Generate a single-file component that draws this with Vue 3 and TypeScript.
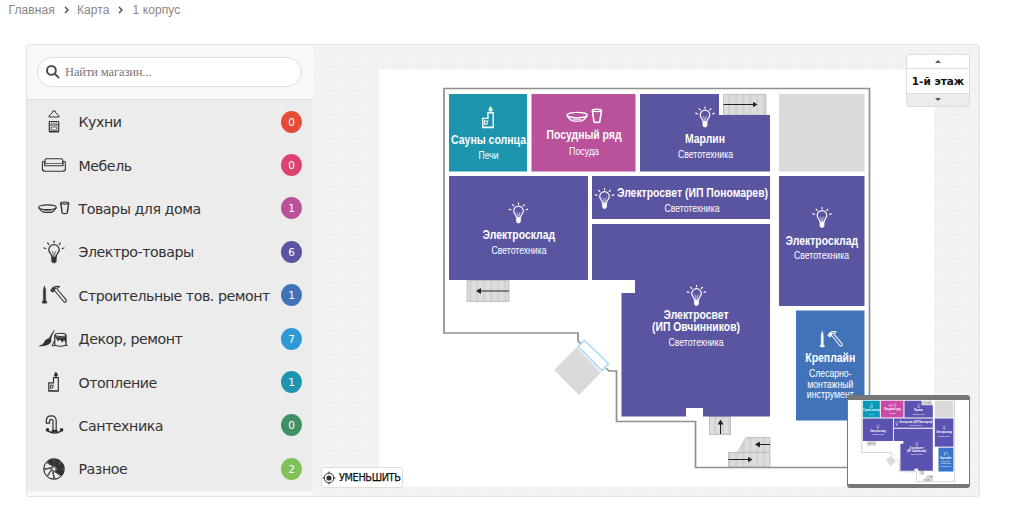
<script lang="ts" setup>
import { ref } from 'vue';

interface Category {
  title: string;
  icon: string;
  count: number;
  tone: string;
}

interface Label {
  text: string;
  x: number;
  y: number;
  width: number;
  bold?: boolean;
}

interface Room {
  tone: string;
  points: string;
  icon?: string;
  iconX?: number;
  iconY?: number;
  iconScale?: number;
  labels: Label[];
}

const crumbs = ['Главная', 'Карта', '1 корпус'];
const search = ref('');
const selected = ref('');

const categories: Category[] = [
  { title: 'Кухни', icon: 'kitchen', count: 0, tone: 'red' },
  { title: 'Мебель', icon: 'sofa', count: 0, tone: 'rose' },
  { title: 'Товары для дома', icon: 'dishes', count: 1, tone: 'pink' },
  { title: 'Электро-товары', icon: 'bulb', count: 6, tone: 'violet' },
  { title: 'Строительные тов. ремонт', icon: 'tools', count: 1, tone: 'blue' },
  { title: 'Декор, ремонт', icon: 'paint', count: 7, tone: 'sky' },
  { title: 'Отопление', icon: 'stove', count: 1, tone: 'teal' },
  { title: 'Сантехника', icon: 'tap', count: 0, tone: 'green' },
  { title: 'Разное', icon: 'fan', count: 2, tone: 'lime' },
];

const rooms: Room[] = [
  {
    tone: 'teal',
    points: '449,94 527,94 527,171.5 449,171.5',
    icon: 'stove',
    iconX: 488.5,
    iconY: 117.5,
    iconScale: 1.1,
    labels: [
      { text: 'Сауны солнца', x: 488.5, y: 143.5, width: 75, bold: true },
      { text: 'Печи', x: 488.5, y: 158.5, width: 20 },
    ],
  },
  {
    tone: 'pink',
    points: '531.5,94 635.5,94 635.5,171.5 531.5,171.5',
    icon: 'dishes',
    iconX: 584.6,
    iconY: 116,
    iconScale: 1.15,
    labels: [
      { text: 'Посудный ряд', x: 584, y: 139.3, width: 75, bold: true },
      { text: 'Посуда', x: 584, y: 154.5, width: 30 },
    ],
  },
  {
    tone: 'violet',
    points: '640,94 719,94 719,115 770,115 770,171.5 640,171.5',
    icon: 'bulb',
    iconX: 705,
    iconY: 117,
    labels: [
      { text: 'Марлин', x: 705, y: 143, width: 40, bold: true },
      { text: 'Светотехника', x: 705.5, y: 158, width: 55 },
    ],
  },
  { tone: 'empty', points: '779,94 864.5,94 864.5,171.5 779,171.5', labels: [] },
  {
    tone: 'violet',
    points: '449,176 588,176 588,280 449,280',
    icon: 'bulb',
    iconX: 518.5,
    iconY: 213,
    labels: [
      { text: 'Электросклад', x: 518.8, y: 239.3, width: 72.5, bold: true },
      { text: 'Светотехника', x: 519, y: 254, width: 55 },
    ],
  },
  {
    tone: 'violet',
    points: '592,176 770,176 770,219 592,219',
    icon: 'bulb',
    iconX: 604.5,
    iconY: 198.5,
    labels: [
      { text: 'Электросвет (ИП Пономарев)', x: 692.5, y: 196.7, width: 151, bold: true },
      { text: 'Светотехника', x: 692, y: 211.7, width: 55 },
    ],
  },
  {
    tone: 'violet',
    points:
      '592,224 770,224 770,416.5 703,416.5 703,408 686,408 686,416.5 621.5,416.5 621.5,293 635,293 635,280 592,280',
    icon: 'bulb',
    iconX: 696.5,
    iconY: 295.5,
    labels: [
      { text: 'Электросвет', x: 696, y: 318.7, width: 65, bold: true },
      { text: '(ИП Овчинников)', x: 696, y: 331.3, width: 88, bold: true },
      { text: 'Светотехника', x: 696, y: 346, width: 55 },
    ],
  },
  {
    tone: 'violet',
    points: '779,176 864.5,176 864.5,306 779,306',
    icon: 'bulb',
    iconX: 822,
    iconY: 217.5,
    labels: [
      { text: 'Электросклад', x: 821.8, y: 244.5, width: 72.5, bold: true },
      { text: 'Светотехника', x: 821.5, y: 259.3, width: 55 },
    ],
  },
  {
    tone: 'blue',
    points: '796,310.5 864.5,310.5 864.5,420.5 796,420.5',
    icon: 'tools',
    iconX: 831,
    iconY: 339.5,
    labels: [
      { text: 'Креплайн', x: 830.3, y: 362.3, width: 50, bold: true },
      { text: 'Слесарно-', x: 830.3, y: 377, width: 42.5 },
      { text: 'монтажный', x: 830.3, y: 387.5, width: 46 },
      { text: 'инструмент', x: 830.3, y: 398, width: 47 },
    ],
  },
];
</script>

<template>
  <nav class="crumbs">
    <template v-for="(crumb, i) in crumbs" :key="crumb">
      <svg v-if="i > 0" class="chevron" viewBox="0 0 6 8">
        <path d="M1 1l3 3-3 3" />
      </svg>
      <a>{{ crumb }}</a>
    </template>
  </nav>

  <main class="panel">
    <aside class="sidebar">
      <div class="search">
        <label class="search-box">
          <svg viewBox="0 0 14 14">
            <circle cx="5.4" cy="5.4" r="4.4" />
            <path d="M8.8 8.8l4.300 4.300" />
          </svg>
          <input v-model="search" type="text" placeholder="Найти магазин..." />
        </label>
      </div>
      <ul class="categories">
        <li v-for="item in categories" :key="item.title" @click="selected = item.title">
          <svg class="icon" viewBox="-18 -15 36 30">
            <use :href="'#icon-' + item.icon" />
          </svg>
          <span class="title">{{ item.title }}</span>
          <span class="count" :class="item.tone">{{ item.count }}</span>
        </li>
      </ul>
    </aside>

    <section class="stage">
      <svg class="canvas" viewBox="313 45 666 451">
        <defs>
          <g id="icon-kitchen" fill="none" stroke="currentColor">
            <path d="M-5-5h10v-1L1.200-10v-1h-2.400v1L-5-6z" />
            <rect x="-4.7" y="-.5" width="9.4" height="10" rx=".5" stroke-width="1.2" />
            <path d="M-4.5 3h9" />
            <path d="M-3 1.200h1.400M-.7 1.200h1.400M1.600 1.200H3" />
            <path d="M-2.8 5h5.600v3h-5.600z" stroke-width=".7" />
            <path d="M-5 9.600H5" stroke-width="1.8" />
          </g>
          <g id="icon-sofa" fill="none" stroke="currentColor" stroke-width="1.1">
            <path d="M-9-1.5v-3.2q0-1.5 1.5-1.5H7.2q1.5 0 1.5 1.5v3.2" />
            <path
              d="M-9.3.8V-3q-2.3-1.4-2.3.8v7.4h1.2v1h20.4v-1h1.3v-7.4q0-2.2-2.3-.8V.8z"
            />
            <path d="M-9.3-1.5H9" stroke-width=".7" />
          </g>
          <g id="icon-dishes" fill="none" stroke="currentColor" stroke-width="1.2">
            <ellipse cx="-6.5" cy="-.8" rx="8.8" ry="2.4" />
            <path d="M-15.2-.2Q-12.2 4.500-8.8 4.500h4.600Q-1 4.500 2.200-.2" />
            <path d="M-10.300 2.800h7.600" stroke-width=".8" />
            <ellipse cx="10.7" cy="-4.9" rx="4" ry="1.1" />
            <path d="M6.7-4.9L8.2 5q2.5 1.3 5 0l1.5-9.9" stroke-width="1.4" />
          </g>
          <g id="icon-bulb" fill="none" stroke="currentColor">
            <path
              d="M-2.200 5.200q0-2.2-1.4-3.8Q-5.200-.3-5.200-2.200A5.200 5.200 0 0 1 5.200-2.200Q5.200-.3 3.600 1.400 2.200 3 2.200 5.200"
              stroke-width="1.3"
            />
            <path d="M-2.2-1.2L-.8 1v4M2.2-1.2L.8 1v4" stroke-width=".7" />
            <path d="M-2.300 5h4.600v4.200l-1.100 1.600h-2.400l-1.100-1.600z" fill="currentColor" stroke-width=".6" />
            <path
              d="M0-11.500v2.600M-6.7-9.400l1.9 2.2M6.7-9.400L4.8-7.200M-10.5-4.200l2.8.9M10.5-4.200l-2.8.9"
              stroke-width="1.2"
            />
          </g>
          <g id="icon-tools" fill="none" stroke="currentColor">
            <path
              d="M-9.5-9.2l1.2 4V6h1v2.200h-4.400V6h1V-5.2z"
              fill="currentColor"
              stroke-width=".4"
            />
            <path
              d="M-3.200-4.600l2-2.600Q1.500-9.400 6-8.200q-2.500.3-3 2.100l1.300 1.600L12.200 4.800q.6 2.300-1.900 2.500L1.800-3 .2-4.600-1.500-3z"
              stroke-width="1.1"
            />
            <path d="M-3-4.500l2.500-2.700h2.800L.3-4.800z" fill="currentColor" stroke-width=".5" />
          </g>
          <g id="icon-paint" stroke="currentColor" fill="none">
            <path
              d="M.4-8.7q-1.8 3-3.6 8.2 1.3 4.6-3.4 6.2Q-10 7.2-14.6 7q4-1.3 4.8-3.5 1-3 5-4.2Q-2-6 .4-8.7z"
              fill="currentColor"
              stroke-width=".6"
            />
            <ellipse cx="6.4" cy="-4.1" rx="5.6" ry="1.6" stroke-width="1.1" />
            <path d="M.8-4.1V6q5.6 2.5 11.2 0V-4.1" stroke-width="1.2" />
            <path
              d="M1-2.500q5.600 2 11 0V4L10 .5 8.300 3.500 6.800 1 5 .8 4 2.200 3 .3z"
              fill="currentColor"
              stroke-width=".4"
            />
            <path d="M.6 1.5L-2 6.7h3.2M11.8 6.4h2" />
          </g>
          <g id="icon-stove" fill="none" stroke="currentColor" stroke-width="1.2">
            <path d="M-5.2 9.2V.8H-.5V-4.3h4.8V9.2z" />
            <path d="M-3.7 3.2h3l-.8 3h-2.200z" stroke-width="1" />
            <path d="M-5 8.500h9" stroke-width=".7" />
            <path
              d="M1.9-10.3q2.3 2 1.9 4-.3 1-1.9 1t-1.9-1Q-.3-8.5 1.9-10.3z"
              fill="currentColor"
              stroke="none"
            />
          </g>
          <g id="icon-tap" fill="none" stroke="currentColor">
            <path
              d="M-7.7-1.8v-2.5q.2-4.8 5-4.8 4.9 0 4.9 5V5.3H-1v-9q0-2-1.7-2-1.8 0-1.8 2v1.9z"
              stroke-width="1.2"
            />
            <path d="M-6 6.2Q.6 9.7 7.2 6.2" stroke-width="1.5" />
            <circle cx="-6.5" cy="4.9" r="1.8" fill="currentColor" stroke="none" />
            <circle cx="7.6" cy="4.9" r="1.8" fill="currentColor" stroke="none" />
            <path d="M-2.4 5h6v2h-6z" fill="currentColor" stroke="none" />
          </g>
          <g id="icon-fan" stroke="currentColor" stroke-width=".8">
            <circle r="10.3" fill="none" stroke-width=".8" />
            <path
              v-for="n in 8"
              :key="n"
              d="M1.200-3L.2-10Q4.500-10 6.500-7.800L2.800-1.200z"
              :fill="n < 5 ? 'currentColor' : 'none'"
              :transform="`rotate(${n * 45 - 90})`"
            />
            <circle r="2" fill="#ececec" />
          </g>
          <pattern id="steps" width="7" height="60" patternUnits="userSpaceOnUse">
            <rect width="7" height="60" fill="#dcdedd" />
            <rect width="2.5" height="60" fill="#d0d3d1" />
          </pattern>
          <marker
            id="arrow"
            viewBox="0 0 5 6"
            refX="3"
            refY="3"
            markerWidth="5"
            markerHeight="6"
            markerUnits="userSpaceOnUse"
            orient="auto"
          >
            <path d="M0 0l5 3-5 3z" fill="#222" />
          </marker>
        </defs>

        <g id="plan">
          <rect x="379" y="70" width="555" height="416.5" fill="#fff" />
          <path
            class="wall"
            d="M581 344l-3-3v-8H444V88.500h425.500V467.500h-174V421.500h-79V371h-7.500l-3-3"
          />
          <path class="porch" d="M554 370l22.500-22.500L601 372.500 579 395z" />
          <path class="door" d="M578 346.500l6.500-6 24 23-6.500 7.300z" />

          <g class="stairs">
            <path d="M723.500 94.500h42.500v20.500h-42.500z" />
            <path d="M467 280.500h42v21h-42z" />
            <path d="M709.500 416.500h21v18h-21z" />
            <path d="M737.500 452.500l8.500-15h24v15z" />
            <path d="M728.500 452.500h41.500v14h-41.500z" />
          </g>
          <g class="arrows">
            <path d="M723.500 104.500h32" />
            <path d="M509 291h-31" />
            <path d="M720.500 434v-12.500" />
            <path d="M770 444.500h-13" />
            <path d="M728.500 459.500h22" />
          </g>

          <g v-for="(room, i) in rooms" :key="i" class="room" :class="room.tone">
            <polygon :points="room.points" />
            <use
              v-if="room.icon"
              :href="'#icon-' + room.icon"
              :transform="`translate(${room.iconX} ${room.iconY}) scale(${room.iconScale ?? 0.92})`"
            />
            <text
              v-for="label in room.labels"
              :key="label.text"
              :x="label.x"
              :y="label.y"
              :textLength="label.width"
              :class="{ bold: label.bold }"
              lengthAdjust="spacingAndGlyphs"
            >
              {{ label.text }}
            </text>
          </g>
        </g>
      </svg>

      <div class="floors">
        <button aria-label="Этаж выше"><i class="up"></i></button>
        <strong>1-й этаж</strong>
        <button class="below" aria-label="Этаж ниже"><i class="down"></i></button>
      </div>

      <button class="zoom-out">
        <svg viewBox="0 0 14 14">
          <circle cx="7" cy="7" r="4.8" />
          <circle class="dot" cx="7" cy="7" r="2.6" />
          <path d="M7 .5v2M7 11.500v2M.5 7h2M11.500 7h2" />
        </svg>
        <span>УМЕНЬШИТЬ</span>
      </button>

      <div class="minimap">
        <svg viewBox="381 91 555 387" preserveAspectRatio="none">
          <use href="#plan" />
        </svg>
      </div>
    </section>
  </main>
</template>

<style>
body {
  background: #fff;
}
</style>

<style scoped>
.crumbs {
  display: flex;
  align-items: center;
  height: 20px;
  padding-left: 8.5px;
  font: 12px 'Liberation Sans', sans-serif;
  letter-spacing: 0.1px;
  color: #8b8585;
}
.chevron {
  width: 6px;
  height: 8px;
  margin: 0 7px 0 9px;
  fill: none;
  stroke: #444;
  stroke-width: 1.3;
}
.crumbs a:last-child {
  margin-left: 1px;
}

.panel {
  display: flex;
  box-sizing: border-box;
  width: 954px;
  height: 453px;
  margin: 24px 0 0 26px;
  border: 1px solid #e2e2e2;
  border-radius: 3px;
  overflow: hidden;
}

.sidebar {
  width: 286px;
  flex: none;
  background: #f8f8f8;
  font-family: 'DejaVu Sans', sans-serif;
}
.search {
  box-sizing: border-box;
  height: 55px;
  padding: 12px 11px 0 10px;
  border-bottom: 1px solid #dcdcdc;
}
.search-box {
  display: flex;
  align-items: center;
  box-sizing: border-box;
  height: 30px;
  padding-left: 8px;
  background: #fff;
  border: 1px solid #dedede;
  border-radius: 15px;
}
.search-box svg {
  width: 14px;
  height: 14px;
  fill: none;
  stroke: #4c4c4c;
  stroke-width: 2;
}
.search-box input {
  flex: 1;
  min-width: 0;
  padding: 0 0 0 5px;
  border: none;
  outline: none;
  background: none;
  font: 12.5px 'Liberation Serif', serif;
  letter-spacing: -0.12px;
}
.search-box input::placeholder {
  color: #777;
}

.categories {
  margin: 0;
  padding: 0;
  list-style: none;
  background: #ececec;
}
.categories li {
  display: flex;
  align-items: center;
  height: 43.4px;
  padding: 0 11px 0 9px;
  color: #333;
  cursor: pointer;
}
.icon {
  width: 36px;
  height: 30px;
  flex: none;
}
.title {
  flex: 1;
  padding: 1px 0 0 6.5px;
  font-size: 14.2px;
  letter-spacing: -0.45px;
  white-space: nowrap;
}
.count {
  width: 21px;
  height: 22px;
  border-radius: 50%;
  color: #fff;
  font-size: 10.5px;
  line-height: 22px;
  text-align: center;
}
.count.red { background: #e54b36; }
.count.rose { background: #dd4370; }
.count.pink { background: #b9519b; }
.count.violet { background: #5a55a0; }
.count.blue { background: #4273b8; }
.count.sky { background: #2f98d6; }
.count.teal { background: #1e95ae; }
.count.green { background: #3f9163; }
.count.lime { background: #80c158; }

.stage {
  position: relative;
  flex: 1;
  background-color: #f0f0f0;
  background-image:
    linear-gradient(#f6f6f6 1px, transparent 1px),
    linear-gradient(90deg, #f6f6f6 1px, transparent 1px),
    linear-gradient(#f3f3f3 1px, transparent 1px),
    linear-gradient(90deg, #f3f3f3 1px, transparent 1px);
  background-size: 12px 12px, 12px 12px, 3px 3px, 3px 3px;
}
.canvas {
  display: block;
  width: 666px;
  height: 451px;
}
.wall {
  fill: none;
  stroke: #909090;
  stroke-width: 1.7;
}
.porch {
  fill: #dadada;
}
.door {
  fill: #fff;
  stroke: #a4d8f4;
  stroke-width: 1.5;
}
.stairs path {
  fill: url(#steps);
  stroke: #b4b7b5;
  stroke-width: 0.8;
}
.arrows path {
  stroke: #222;
  marker-end: url(#arrow);
}

.room { color: #fff; }
.room.teal { fill: #1e95ae; }
.room.pink { fill: #b9519b; }
.room.violet { fill: #5a55a0; }
.room.blue { fill: #4273b8; }
.room.empty { fill: #dadada; }
.room text {
  fill: #fff;
  font: 11px 'Liberation Sans', sans-serif;
  text-anchor: middle;
}
.room text.bold {
  font-size: 13px;
  font-weight: bold;
}

.floors {
  position: absolute;
  top: 9px;
  right: 9px;
  display: flex;
  flex-direction: column;
  box-sizing: border-box;
  width: 64px;
  height: 53px;
  border: 1px solid #dcdcdc;
  border-radius: 3px;
  background: #fff;
  overflow: hidden;
}
.floors button {
  display: flex;
  align-items: center;
  justify-content: center;
  height: 13px;
  padding: 0;
  border: none;
  background: #fff;
}
.floors .below {
  background: #ececec;
}
.floors strong {
  flex: 1;
  border: solid #dcdcdc;
  border-width: 1px 0;
  font: bold 10.5px/24px 'DejaVu Sans', sans-serif;
  text-align: center;
  white-space: nowrap;
  color: #111;
}
.up,
.down {
  border: solid transparent;
  border-width: 0 3.5px;
}
.up {
  border-bottom: 3px solid #555;
}
.down {
  border-top: 3px solid #555;
}

.zoom-out {
  position: absolute;
  left: 8px;
  bottom: 8px;
  display: flex;
  align-items: center;
  gap: 3px;
  width: 82px;
  height: 21px;
  padding: 0;
  border: 1px solid #dedede;
  border-radius: 3px;
  background: #fff;
  font: 10.8px 'DejaVu Sans Condensed', 'DejaVu Sans', sans-serif;
  font-stretch: condensed;
  letter-spacing: -0.35px;
  white-space: nowrap;
  color: #111;
  -webkit-text-stroke: 0.25px #111;
  cursor: pointer;
}
.zoom-out svg {
  width: 14px;
  height: 14px;
  flex: none;
  fill: none;
  stroke: #333;
}
.zoom-out .dot {
  fill: #333;
  stroke: none;
}

.minimap {
  position: absolute;
  right: 9px;
  bottom: 8px;
  box-sizing: border-box;
  width: 123px;
  height: 93px;
  border: solid #777;
  border-width: 5px 1px 4px;
  border-radius: 3px;
  background: #fff;
  overflow: hidden;
}
.minimap svg {
  display: block;
  width: 121px;
  height: 84px;
  filter: saturate(1.25);
}
</style>
